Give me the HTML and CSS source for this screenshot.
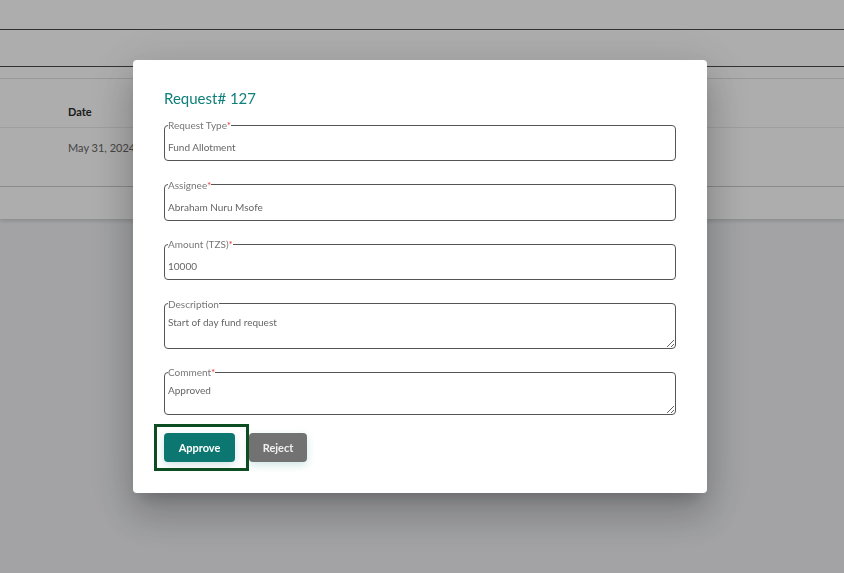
FILE: index.html
```html
<!DOCTYPE html>
<html lang="en">
  <head>
    <meta charset="UTF-8" />
    <meta name="viewport" content="width=device-width, initial-scale=1.0" />
    <title>Fund Requests</title>
    <link rel="stylesheet" href="styles.css">
  </head>
  <body>
    <!-- Page behind the dialog -->
    <div class="page">
      <div class="panel">
        <div class="toolbar"></div>
        <div class="filters"></div>
        <div class="spacer"></div>
        <table class="requests">
          <thead>
            <tr><th>Date</th></tr>
          </thead>
          <tbody>
            <tr><td>May 31, 2024</td></tr>
          </tbody>
        </table>
        <div class="pager"></div>
      </div>
    </div>

    <!-- Dialog -->
    <div class="overlay">
      <div class="modal">
        <h2 class="modal-title">Request# 127</h2>
        <form class="request-form">
          <fieldset class="field">
            <legend>Request Type<span class="req">*</span></legend>
            <input type="text" value="Fund Allotment" readonly />
          </fieldset>
          <fieldset class="field">
            <legend>Assignee<span class="req">*</span></legend>
            <input type="text" value="Abraham Nuru Msofe" readonly />
          </fieldset>
          <fieldset class="field">
            <legend>Amount (TZS)<span class="req">*</span></legend>
            <input type="text" value="10000" readonly />
          </fieldset>
          <fieldset class="field">
            <legend>Description</legend>
            <textarea class="tall" readonly>Start of day fund request</textarea>
          </fieldset>
          <fieldset class="field">
            <legend>Comment<span class="req">*</span></legend>
            <textarea>Approved</textarea>
          </fieldset>
          <div class="actions">
            <button type="button" class="btn btn-approve">Approve</button>
            <button type="button" class="btn btn-reject">Reject</button>
          </div>
        </form>
      </div>
    </div>
  </body>
</html>
```

FILE: styles.css
```css
body {
  margin: 0;
  font-family: "Lato", "Noto Sans", sans-serif;
}

/* Background page */
.page {
  min-height: 573px;
  background-color: #f0f1f4;
}

.panel {
  background-color: #fff;
  box-shadow: 0 2px 4px rgba(0, 0, 0, 0.15);
}

.toolbar {
  height: 29px;
  border-bottom: 1px solid #4b4b4b;
}

.filters {
  height: 36px;
  border-bottom: 1px solid #4b4b4b;
}

.spacer {
  height: 11px;
  border-bottom: 1px solid #e0e0e0;
}

.requests {
  width: 100%;
  border-collapse: collapse;
}

.requests th {
  height: 21px;
  padding: 27px 0 0 68px;
  vertical-align: top;
  text-align: left;
  font-size: 11px;
  line-height: 12px;
  font-weight: bold;
  color: #2a2a2a;
  border-bottom: 1px solid #ebebeb;
}

.requests td {
  height: 58px;
  padding: 0 0 0 68px;
  vertical-align: top;
  font-size: 11px;
  color: #666;
  line-height: 40px;
  border-bottom: 1px solid #cbcbcb;
}

.pager {
  height: 32px;
}

/* Dialog */
.overlay {
  position: fixed;
  top: 0;
  left: 0;
  right: 0;
  bottom: 0;
  display: flex;
  justify-content: center;
  align-items: flex-start;
  padding: 60px 4px 0 0;
  background-color: rgba(0, 0, 0, 0.32);
}

.modal {
  width: 574px;
  box-sizing: border-box;
  padding: 28px 31px 31px;
  background-color: #fff;
  border-radius: 4px;
  box-shadow: 0 11px 15px -7px rgba(0, 0, 0, 0.2),
    0 24px 38px 3px rgba(0, 0, 0, 0.14), 0 9px 46px 8px rgba(0, 0, 0, 0.12);
}

.modal-title {
  margin: 0 0 11px;
  font-size: 15px;
  line-height: 20px;
  font-weight: normal;
  color: #10807a;
}

.request-form {
  display: flex;
  flex-direction: column;
  gap: 17.5px;
}

.field {
  margin: 0;
  padding: 0 0 0 3px;
  border: 1px solid #555;
  border-radius: 4px;
  min-width: 0;
}

.field legend {
  padding: 0;
  font-size: 10px;
  line-height: 12px;
  color: #777;
}

.req {
  color: #e53935;
}

.field input,
.field textarea {
  display: block;
  width: 100%;
  box-sizing: border-box;
  margin: 0;
  border: none;
  outline: none;
  background: transparent;
  font-family: inherit;
  font-size: 10px;
  color: #666;
}

.field input {
  height: 29px;
  padding: 3px 0 0;
}

.field textarea {
  height: 36px;
  padding: 5px 0 0;
  line-height: 14px;
  resize: vertical;
}

.field textarea.tall {
  height: 38px;
}

.actions {
  display: flex;
  gap: 14px;
}

.btn {
  height: 29px;
  border: none;
  border-radius: 4px;
  font-family: inherit;
  font-size: 11px;
  font-weight: bold;
  color: #fff;
  box-shadow: 0 3px 8px rgba(16, 128, 122, 0.2);
  cursor: pointer;
}

.btn-approve {
  position: relative;
  width: 71px;
  background-color: #0c7771;
}

/* Focus marker round the approve button */
.btn-approve::after {
  content: "";
  position: absolute;
  top: -9px;
  left: -10px;
  right: -14px;
  bottom: -9px;
  border: 3px solid #0d4d22;
}

.btn-reject {
  width: 58px;
  background-color: #727272;
  color: #f0f0f0;
}
```
